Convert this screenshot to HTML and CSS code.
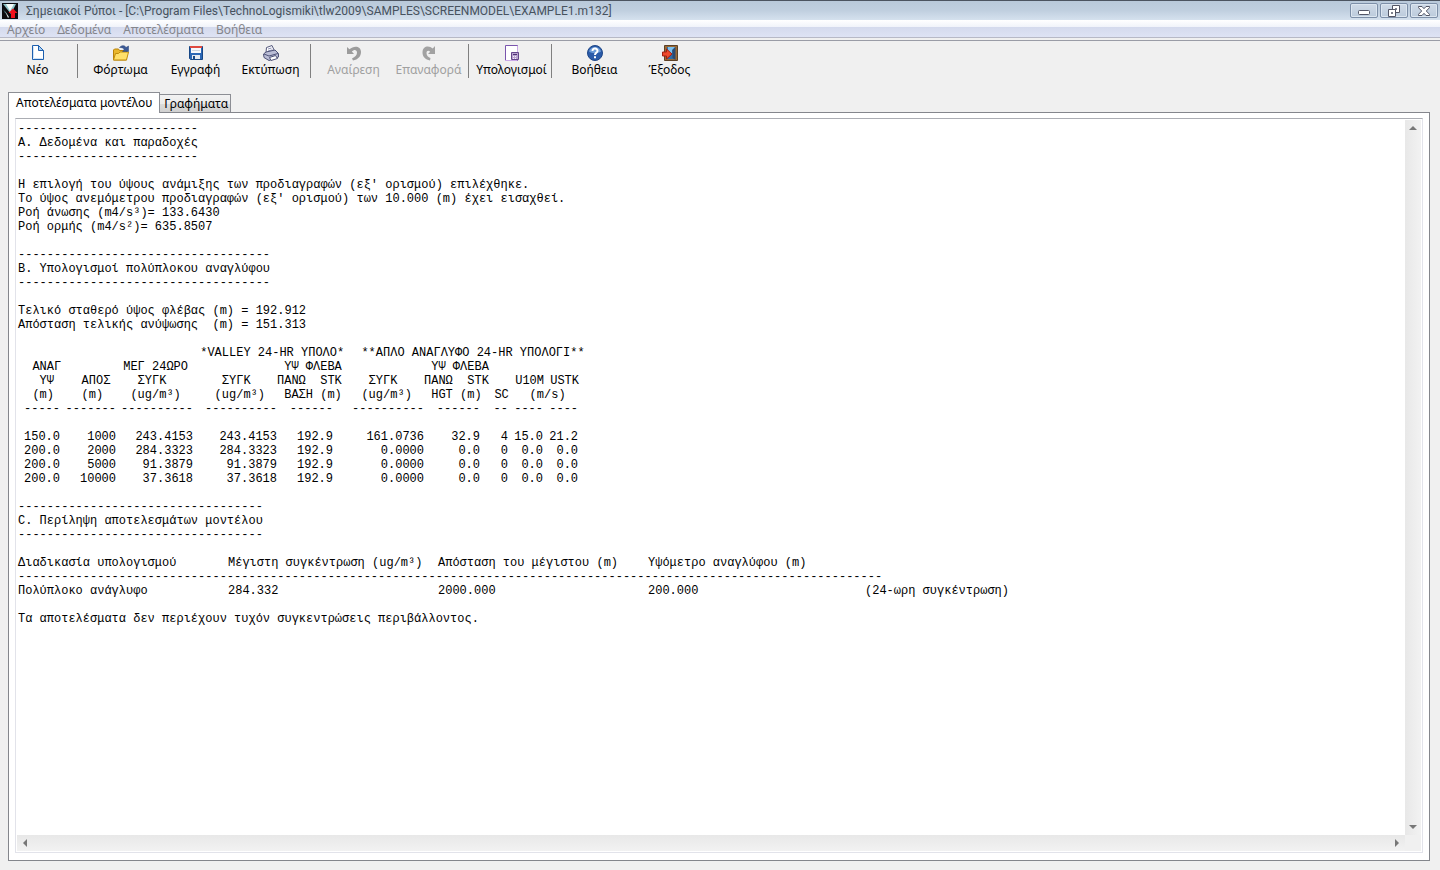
FILE: index.html
```html
<!DOCTYPE html>
<html lang="el">
<head>
  <meta charset="UTF-8" />
  <meta name="viewport" content="width=device-width, initial-scale=1" />
  <title>Σημειακοί Ρύποι</title>
  <link rel="stylesheet" href="styles.css">
</head>
<body>

  <header class="title-bar">
    <svg class="app-icon" viewBox="0 0 16 16">
      <rect width="16" height="16" fill="#0a0a10"/>
      <path d="M1 1h13L9 11z" fill="#8fc3c8"/>
      <path d="M4 1h8L8 8z" fill="#f4fbfb"/>
      <path d="M1 6l4 5-2-1z" fill="#3f6f7c"/>
      <path d="M3 8l4 6-1 1z" fill="#dfe9ea"/>
      <path d="M11 5.500l4.500 4.500H13v5H9v-5H6.500z" fill="#f0101c"/>
    </svg>
    <h1 class="title">Σημειακοί Ρύποι - [C:\Program Files\TechnoLogismiki\tlw2009\SAMPLES\SCREENMODEL\EXAMPLE1.m132]</h1>
    <div class="window-buttons">
      <button class="window-button" aria-label="Ελαχιστοποίηση">
        <svg width="12" height="12" viewBox="0 0 12 12"><rect x=".5" y="5.500" width="11" height="4" rx="1" fill="#fff" stroke="#535666"/></svg>
      </button>
      <button class="window-button" aria-label="Επαναφορά παραθύρου">
        <svg width="12" height="12" viewBox="0 0 12 12" fill="#fff" stroke="#535666"><path d="M4.500.5h7v7h-7z"/><path d="M7.500 3.500h1v1h-1z"/><path d="M.5 4.500h7v7h-7z"/><path d="M3.500 7.500h1v1h-1z"/></svg>
      </button>
      <button class="window-button" aria-label="Κλείσιμο">
        <svg width="12" height="12" viewBox="0 0 12 12"><path d="M.5 1.500h3.500L6 3.700 8 1.500h3.500v1.200L8.300 6l3.200 3.300v1.200H8L6 8.300 4 10.500H.5V9.300L3.700 6 .5 2.700z" fill="#fff" stroke="#535666"/></svg>
      </button>
    </div>
  </header>

  <nav class="menu-bar">
    <a href="#">Αρχείο</a>
    <a href="#">Δεδομένα</a>
    <a href="#">Αποτελέσματα</a>
    <a href="#">Βοήθεια</a>
  </nav>

  <div class="toolbar">
    <button class="tool">
      <svg class="tool-icon" viewBox="0 0 16 16">
        <path d="M2.500.5h6l5 5v9h-11z" fill="#fff" stroke="#1d5fae"/>
        <path d="M3.500 13.500v-12M4 13.500h8.500" stroke="#cfe4f8" fill="none"/>
        <path d="M8.500.5v5h5z" fill="#a9d0f3" stroke="#1d5fae"/>
      </svg>
      Νέο
    </button>
    <span class="separator"></span>
    <button class="tool">
      <svg class="tool-icon" viewBox="0 0 16 16">
        <path d="M.5 15v-10l1-1h4l1 1.500h7v9.500z" fill="#e9b72c" stroke="#b98208"/>
        <path d="M.5 15L2.500 8.500h3L7 7h8.500L13.500 15z" fill="#ffe06a" stroke="#c08c0c"/>
        <path d="M6.500 2.500C8.500 0 12 .2 13 2.500l2.500-1.500v5.500h-6L11.300 5C10.500 2.800 8.500 2.300 6.500 2.500z" fill="#3c5a96" stroke="#26427b" stroke-width=".5"/>
      </svg>
      Φόρτωμα
    </button>
    <button class="tool">
      <svg class="tool-icon" viewBox="0 0 16 16">
        <path d="M1.500 1.500h13v13h-12l-1-1z" fill="#2b67b5" stroke="#174785"/>
        <path d="M3 1h10v7H3z" fill="#f6f8fb"/>
        <path d="M2 1h12v2H2z" fill="#df4a3f"/>
        <path d="M4 5.500h8" stroke="#ccd4df"/>
        <path d="M4 10h8v4H4z" fill="#e3e9f1"/>
        <path d="M5 11h2v3H5z" fill="#174785"/>
      </svg>
      Εγγραφή
    </button>
    <button class="tool">
      <svg class="tool-icon" viewBox="0 0 16 16">
        <path d="M3 7.500l.5-5L9 .5l2.500 5.500z" fill="#fff" stroke="#54587c"/>
        <path d="M5 4l3.500-1M5 6l4.500-1.200" stroke="#8d92b8"/>
        <path d="M.5 9L3 7l9-2 3.500 3.500v3.500L6 15.500l-5-3z" fill="#babdd6" stroke="#4d5176"/>
        <path d="M1 9l5 2 9-2.500" fill="none" stroke="#4d5176"/>
        <path d="M6.500 12.500l6-2 2 3-6.500 2z" fill="#fff" stroke="#4d5176"/>
      </svg>
      Εκτύπωση
    </button>
    <span class="separator"></span>
    <button class="tool" disabled>
      <svg class="tool-icon" viewBox="0 0 16 16">
        <path d="M1 2v7h7L5.800 6.500C8 4 11 4.500 11 7.500c0 3-2 4.500-5 6l1 2c5-1 8-4 8-8.500C15 1 8 0 3.500 4.200z" fill="#9c9c9c"/>
      </svg>
      Αναίρεση
    </button>
    <button class="tool" disabled>
      <svg class="tool-icon" viewBox="0 0 16 16">
        <path d="M14 1v8H7l2.200-2.300C7.500 5 5.500 5.700 5.500 8c0 2.700 1.700 4 4 5l-.5 2.500C4.500 14.500 1.500 12 1.500 7.500 1.500 1 8 0 11.700 3.500z" fill="#a2a2a2"/>
      </svg>
      Επαναφορά
    </button>
    <span class="separator"></span>
    <button class="tool">
      <svg class="tool-icon" viewBox="0 0 16 16">
        <path d="M1.500.5h12v15h-12z" fill="#fff" stroke="#7a55ad"/>
        <path d="M13.500 1v14M1 15.500h12" stroke="#c9a9e8"/>
        <path d="M7.500 7.500h7v7h-7z" fill="#b9a3cf" stroke="#65458c"/>
        <path d="M9 9.500h4" stroke="#4e3173"/>
        <path d="M9 11.500h1m1 0h1M9 13.500h1m1 0h1" stroke="#f4eefa"/>
      </svg>
      Υπολογισμοί
    </button>
    <span class="separator"></span>
    <button class="tool">
      <svg class="tool-icon" viewBox="0 0 16 16">
        <circle cx="8" cy="8" r="7.500" fill="#2a5ba9" stroke="#1e4788"/>
        <path d="M2 6.500C3 .5 13 .5 14 6.500 11 8.500 5 8.500 2 6.500z" fill="#6c9cd8"/>
        <path d="M5.500 6C5.500 2.500 10.700 2.800 10.500 6 10.400 7.800 8 7.500 8 10" fill="none" stroke="#fff" stroke-width="2"/>
        <path d="M7 11.300h2v2H7z" fill="#fff"/>
      </svg>
      Βοήθεια
    </button>
    <button class="tool">
      <svg class="tool-icon" viewBox="0 0 16 16">
        <path d="M2.500.5h13v15h-13z" fill="#9a6a36" stroke="#5d4126"/>
        <path d="M5 2h8v12H5z" fill="#2e6ca8"/>
        <path d="M6 2h7l-3 3v5H6z" fill="#7cc0ee"/>
        <path d="M13.500 2v13l-3-2V5z" fill="#2c4a70"/>
        <path d="M.5 7h4V4l5.500 5-5.500 5v-3h-4z" fill="#ee4a2c" stroke="#a31f10"/>
      </svg>
      Έξοδος
    </button>
  </div>

  <main class="workspace">
    <div class="tabs" role="tablist">
      <button class="tab active" role="tab" aria-selected="true">Αποτελέσματα μοντέλου</button>
      <button class="tab" role="tab" aria-selected="false">Γραφήματα</button>
    </div>
    <section class="panel">
      <div class="memo">
        <article class="report">
<pre>-------------------------
Α. Δεδομένα και παραδοχές
-------------------------

Η επιλογή του ύψους ανάμιξης των προδιαγραφών (εξ' ορισμού) επιλέχθηκε.
Το ύψος ανεμόμετρου προδιαγραφών (εξ' ορισμού) των 10.000 (m) έχει εισαχθεί.
Ροή άνωσης (m4/s³)= 133.6430
Ροή ορμής (m4/s²)= 635.8507

-----------------------------------
Β. Υπολογισμοί πολύπλοκου αναγλύφου
-----------------------------------

Τελικό σταθερό ύψος φλέβας (m) = 192.912
Απόσταση τελικής ανύψωσης  (m) = 151.313</pre>

          <table class="terrain">
            <colgroup>
              <col class="w-42"><col class="w-56"><col class="w-77"><col class="w-84"><col class="w-70">
              <col class="w-77"><col class="w-56"><col class="w-28"><col class="w-35"><col class="w-35">
            </colgroup>
            <thead>
              <tr><th></th><th></th><th></th><th colspan="2"> *VALLEY 24-HR ΥΠΟΛΟ*</th><th colspan="5">  **ΑΠΛΟ ΑΝΑΓΛΥΦΟ 24-HR ΥΠΟΛΟΓΙ**</th></tr>
              <tr><th>  ΑΝΑΓ</th><th></th><th> ΜΕΓ 24ΩΡΟ</th><th></th><th> ΥΨ ΦΛΕΒΑ</th><th></th><th> ΥΨ ΦΛΕΒΑ</th><th></th><th></th><th></th></tr>
              <tr><th>   ΥΨ</th><th>   ΑΠΟΣ</th><th>   ΣΥΓΚ</th><th>    ΣΥΓΚ</th><th>ΠΑΝΩ  STK</th><th>   ΣΥΓΚ</th><th>ΠΑΝΩ  STK</th><th></th><th> U10M</th><th> USTK</th></tr>
              <tr><th>  (m)</th><th>   (m)</th><th>  (ug/m³)</th><th>   (ug/m³)</th><th> ΒΑΣΗ (m)</th><th>  (ug/m³)</th><th> HGT (m)</th><th>  SC</th><th colspan="2">   (m/s)</th></tr>
            </thead>
            <tbody>
              <tr class="rule"><td>-----</td><td>-------</td><td>----------</td><td>----------</td><td>------</td><td>----------</td><td>------</td><td>--</td><td>----</td><td>----</td></tr>
              <tr><td>150.0</td><td>1000</td><td>243.4153</td><td>243.4153</td><td>192.9</td><td>161.0736</td><td>32.9</td><td>4</td><td>15.0</td><td>21.2</td></tr>
              <tr><td>200.0</td><td>2000</td><td>284.3323</td><td>284.3323</td><td>192.9</td><td>0.0000</td><td>0.0</td><td>0</td><td>0.0</td><td>0.0</td></tr>
              <tr><td>200.0</td><td>5000</td><td>91.3879</td><td>91.3879</td><td>192.9</td><td>0.0000</td><td>0.0</td><td>0</td><td>0.0</td><td>0.0</td></tr>
              <tr><td>200.0</td><td>10000</td><td>37.3618</td><td>37.3618</td><td>192.9</td><td>0.0000</td><td>0.0</td><td>0</td><td>0.0</td><td>0.0</td></tr>
            </tbody>
          </table>

<pre>----------------------------------
C. Περίληψη αποτελεσμάτων μοντέλου
----------------------------------</pre>

          <table class="summary">
            <colgroup>
              <col class="w-210"><col class="w-210"><col class="w-210"><col class="w-217"><col class="w-210">
            </colgroup>
            <thead>
              <tr><th>Διαδικασία υπολογισμού</th><th>Μέγιστη συγκέντρωση (ug/m³)</th><th>Απόσταση του μέγιστου (m)</th><th>Υψόμετρο αναγλύφου (m)</th><th></th></tr>
            </thead>
            <tbody>
              <tr><td colspan="5">------------------------------------------------------------------------------------------------------------------------</td></tr>
              <tr><td>Πολύπλοκο ανάγλυφο</td><td>284.332</td><td>2000.000</td><td>200.000</td><td>(24-ωρη συγκέντρωση)</td></tr>
            </tbody>
          </table>

<pre>Τα αποτελέσματα δεν περιέχουν τυχόν συγκεντρώσεις περιβάλλοντος.</pre>
        </article>
        <div class="scrollbar vertical">
          <svg width="8" height="4" viewBox="0 0 8 4"><path d="M4 0l4 4H0z" fill="#777"/></svg>
          <svg width="8" height="4" viewBox="0 0 8 4"><path d="M0 0h8L4 4z" fill="#777"/></svg>
        </div>
        <div class="scrollbar horizontal">
          <svg width="4" height="8" viewBox="0 0 4 8"><path d="M4 0v8L0 4z" fill="#777"/></svg>
          <svg width="4" height="8" viewBox="0 0 4 8"><path d="M0 0l4 4-4 4z" fill="#777"/></svg>
        </div>
        <div class="corner"></div>
      </div>
    </section>
  </main>

</body>
</html>
```
FILE: styles.css
```css
* {
  box-sizing: border-box;
}

body {
  margin: 0;
  min-height: 100vh;
  display: flex;
  flex-direction: column;
  background: #f0f0f0;
  color: #000;
  font-family: "Noto Sans", "Open Sans", sans-serif;
  font-size: 12px;
}

button {
  font: inherit;
  color: inherit;
  padding: 0;
  border: none;
  background: none;
}

/* Title bar */
.title-bar {
  display: flex;
  align-items: center;
  height: 20px;
  padding-left: 2px;
  border-top: 1px solid #4c5460;
  background: linear-gradient(#b9c9da, #c0cfdf 50%, #d5e1ee);
}

.app-icon {
  width: 16px;
  height: 16px;
}

.title {
  flex: 1;
  margin: 0 0 0 8px;
  font-family: Roboto, "Noto Sans", sans-serif;
  font-size: 12px;
  font-weight: normal;
  line-height: 18px;
  color: #47525e;
  white-space: nowrap;
}

.window-buttons {
  display: flex;
  gap: 2px;
  padding-right: 2px;
}

.window-button {
  display: flex;
  align-items: center;
  justify-content: center;
  width: 28px;
  height: 15px;
  border: 1px solid #7d8fa8;
  border-radius: 2px;
  background: linear-gradient(#cfdae7, #bccbdc);
  box-shadow: inset 0 0 0 1px #dce6f0;
}

/* Menu */
.menu-bar {
  display: flex;
  gap: 12px;
  height: 21px;
  padding-left: 7px;
  border-bottom: 1px solid #9a9ca6;
  background: linear-gradient(#fff, #f0f3fa 35%, #d4daed 36%, #dee3f4 85%, #b7b9c6 86%, #b7b9c6 90%, #f0f0f0 91%);
}

.menu-bar a {
  line-height: 20px;
  color: #85868c;
  text-decoration: none;
}

/* Toolbar */
.toolbar {
  display: flex;
  height: 51px;
  padding-top: 3px;
}

.tool {
  display: flex;
  flex-direction: column;
  align-items: center;
  width: 75px;
  height: 34px;
  padding-top: 1px;
  line-height: 18px;
  white-space: nowrap;
}

.tool:disabled {
  color: #a0a0a0;
}

.tool-icon {
  flex: none;
  width: 16px;
  height: 16px;
}

.separator {
  width: 8px;
  height: 34px;
}

.separator::before {
  content: "";
  display: block;
  width: 1px;
  height: 34px;
  margin-left: 2px;
  background: #808080;
}

/* Tabs */
.workspace {
  flex: 1;
  display: flex;
  flex-direction: column;
  padding: 0 10px 9px 8px;
}

.tabs {
  display: flex;
  align-items: flex-end;
  height: 20px;
}

.tab {
  height: 18px;
  padding: 0 2px 0 4px;
  border: 1px solid #8c8e94;
  border-left: none;
  border-bottom: none;
  background: linear-gradient(#f2f2f2, #ebebeb 50%, #dcdcdc 51%, #d0d0d0);
  line-height: 18px;
  white-space: nowrap;
}

.tab.active {
  position: relative;
  height: 21px;
  margin-bottom: -1px;
  padding: 0 7px;
  border-left: 1px solid #8c8e94;
  background: #fff;
}

.panel {
  flex: 1;
  display: flex;
  padding: 5px 6px 7px;
  border: 1px solid #84868c;
  background: #fff;
}

.memo {
  flex: 1;
  display: grid;
  grid-template-columns: 1fr 16px;
  grid-template-rows: 1fr 16px;
  padding: 1px;
  border: 1px solid #e2e3ea;
  border-top-color: #abadb3;
}

/* Report */
.report {
  display: flex;
  flex-direction: column;
  align-items: flex-start;
  gap: 14px;
  padding: 2px 1px;
  font-family: "Liberation Mono", "DejaVu Sans Mono", monospace;
  font-size: 12px;
  line-height: 14px;
  white-space: pre;
}

.report pre {
  margin: 0;
  font: inherit;
}

.report table {
  table-layout: fixed;
  border-collapse: collapse;
}

.report th,
.report td {
  height: 14px;
  padding: 0;
  font-weight: normal;
  text-align: left;
}

.terrain {
  width: 560px;
}

.report .terrain td {
  text-align: right;
}

.report .terrain td:nth-child(5) {
  padding-right: 14px;
}

.report .rule td {
  height: 28px;
  vertical-align: top;
}

.summary {
  width: 1057px;
}

.w-28 { width: 28px; }
.w-35 { width: 35px; }
.w-42 { width: 42px; }
.w-56 { width: 56px; }
.w-70 { width: 70px; }
.w-77 { width: 77px; }
.w-84 { width: 84px; }
.w-210 { width: 210px; }
.w-217 { width: 217px; }

/* Scrollbars */
.scrollbar {
  display: flex;
  align-items: center;
  justify-content: space-between;
}

.scrollbar.vertical {
  flex-direction: column;
  padding: 6px 0;
  background: linear-gradient(to right, #e8e8e8, #f2f2f2);
}

.scrollbar.horizontal {
  padding: 0 6px;
  background: linear-gradient(#e8e8e8, #f2f2f2);
}

.corner {
  background: #f0f0f0;
}
```
